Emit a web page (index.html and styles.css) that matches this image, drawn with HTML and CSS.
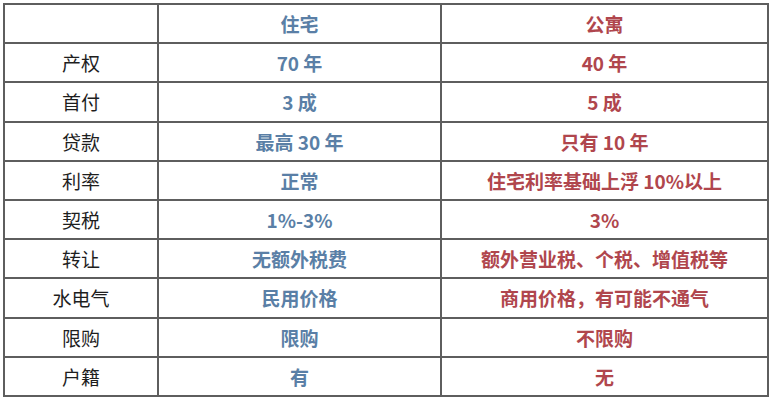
FILE: index.html
```html
<!DOCTYPE html>
<html lang="zh">
<head>
<meta charset="utf-8">
<link rel="stylesheet" href="styles.css">
</head>
<body>
<div class="grid">
  <div class="cell"></div><div class="cell house">住宅</div><div class="cell apt">公寓</div>
  <div class="cell label">产权</div><div class="cell house">70 年</div><div class="cell apt">40 年</div>
  <div class="cell label">首付</div><div class="cell house">3 成</div><div class="cell apt">5 成</div>
  <div class="cell label">贷款</div><div class="cell house">最高 30 年</div><div class="cell apt">只有 10 年</div>
  <div class="cell label">利率</div><div class="cell house">正常</div><div class="cell apt">住宅利率基础上浮 10%以上</div>
  <div class="cell label">契税</div><div class="cell house">1%-3%</div><div class="cell apt">3%</div>
  <div class="cell label">转让</div><div class="cell house">无额外税费</div><div class="cell apt">额外营业税、个税、增值税等</div>
  <div class="cell label">水电气</div><div class="cell house">民用价格</div><div class="cell apt">商用价格，有可能不通气</div>
  <div class="cell label">限购</div><div class="cell house">限购</div><div class="cell apt">不限购</div>
  <div class="cell label">户籍</div><div class="cell house">有</div><div class="cell apt">无</div>
</div>
</body>
</html>
```
FILE: styles.css
```css
html, body {
  margin: 0;
  padding: 0;
  background: #ffffff;
}
body {
  padding: 3px;
  font-family: "Noto Sans CJK SC", "Noto Sans", sans-serif;
}
.grid {
  width: 766px;
  height: 394px;
  box-sizing: border-box;
  display: grid;
  grid-template-columns: 152px 281px 1fr;
  grid-template-rows: repeat(10, 1fr);
  gap: 2px;
  padding: 2px;
  background: #5e5e5e;
}
.cell {
  background: #ffffff;
  display: flex;
  align-items: center;
  justify-content: center;
  font-size: 19px;
  line-height: 1;
}
.label {
  color: #1e1e1e;
  font-weight: 400;
}
.house {
  color: #5a7fa6;
  font-weight: 700;
}
.apt {
  color: #b0464d;
  font-weight: 700;
}
```
